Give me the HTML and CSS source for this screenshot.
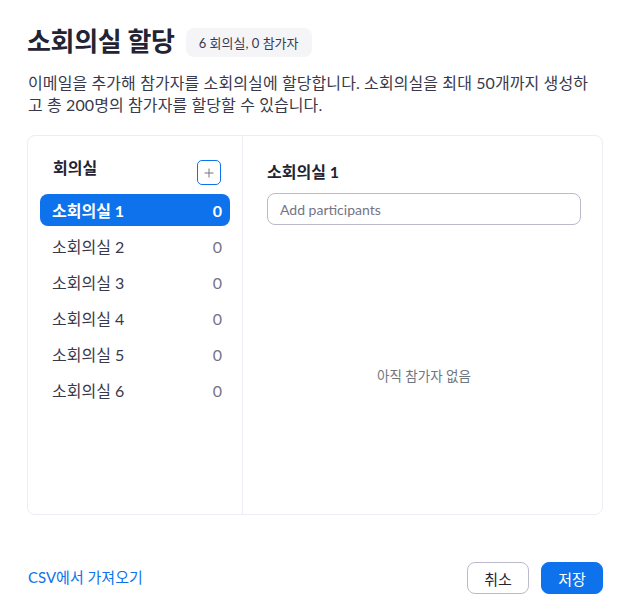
FILE: index.html
```html
<!DOCTYPE html>
<html lang="ko">
<head>
<meta charset="utf-8">
<link rel="stylesheet" href="styles.css">
</head>
<body>
<div class="dialog">
  <div class="header">
    <h1 class="title">소회의실 할당</h1>
    <span class="badge">6 회의실, 0 참가자</span>
  </div>
  <p class="desc">이메일을 추가해 참가자를 소회의실에 할당합니다. 소회의실을 최대 50개까지 생성하고 총 200명의 참가자를 할당할 수 있습니다.</p>
  <div class="panel">
    <div class="rooms">
      <div class="rooms-head">
        <span class="rooms-title">회의실</span>
        <button class="add-btn" aria-label="add">
          <svg width="10" height="10" viewBox="0 0 10 10"><path d="M5 0.5v9M0.5 5h9" stroke="#747487" stroke-width="1" fill="none"/></svg>
        </button>
      </div>
      <ul class="room-list">
        <li class="room selected"><span>소회의실 1</span><span class="count">0</span></li>
        <li class="room"><span>소회의실 2</span><span class="count">0</span></li>
        <li class="room"><span>소회의실 3</span><span class="count">0</span></li>
        <li class="room"><span>소회의실 4</span><span class="count">0</span></li>
        <li class="room"><span>소회의실 5</span><span class="count">0</span></li>
        <li class="room"><span>소회의실 6</span><span class="count">0</span></li>
      </ul>
    </div>
    <div class="detail">
      <div class="detail-title">소회의실 1</div>
      <input class="input" type="text" placeholder="Add participants">
      <div class="empty">아직 참가자 없음</div>
    </div>
  </div>
  <div class="footer">
    <a class="csv">CSV에서 가져오기</a>
    <div class="actions">
      <button class="btn cancel">취소</button>
      <button class="btn save">저장</button>
    </div>
  </div>
</div>
</body>
</html>
```
FILE: styles.css
```css
* { box-sizing: border-box; }
html, body { margin: 0; padding: 0; background: #fff; }
body {
  font-family: Lato, "Noto Sans CJK KR", sans-serif;
  color: #232333;
}
.dialog {
  width: 630px;
  padding: 24px 27px 0 27px;
}
.header {
  display: flex;
  align-items: center;
  gap: 11px;
  height: 34px;
}
.title {
  margin: 0;
  font-size: 26px;
  line-height: 32px;
  font-weight: 700;
  color: #232333;
  letter-spacing: -0.3px;
}
.badge {
  display: inline-flex;
  align-items: center;
  height: 29px;
  padding: 0 13px;
  margin-top: 3px;
  background: #f5f5f8;
  border-radius: 8px;
  font-size: 13px;
  color: #39394d;
}
.desc {
  margin: 14px 8px 0 1px;
  font-size: 16px;
  line-height: 22px;
  letter-spacing: 0.1px;
  color: #39394d;
}
.panel {
  margin-top: 19px;
  height: 380px;
  border: 1px solid #ededf3;
  border-radius: 8px;
  display: flex;
}
.rooms {
  width: 215px;
  border-right: 1px solid #ededf3;
  padding: 0 12px;
}
.rooms-head {
  display: flex;
  justify-content: space-between;
  align-items: flex-start;
  padding: 21px 9px 0 13px;
  height: 58px;
}
.rooms-title {
  font-size: 16px;
  font-weight: 700;
  line-height: 22px;
  color: #232333;
}
.add-btn {
  margin-top: 3px;
  width: 24px;
  height: 25px;
  border: 1px solid #0e72ed;
  border-radius: 5px;
  background: #fff;
  padding: 0;
  display: flex;
  align-items: center;
  justify-content: center;
}
.room-list {
  list-style: none;
  margin: 0;
  padding: 0;
  display: flex;
  flex-direction: column;
  gap: 4px;
}
.room {
  height: 32px;
  display: flex;
  align-items: center;
  justify-content: space-between;
  padding: 0 8px 0 12px;
  border-radius: 8px;
  font-size: 16px;
  color: #39394d;
}
.room .count { color: #747487; }
.room.selected {
  background: #0e72ed;
  color: #fff;
  font-weight: 700;
}
.room.selected .count { color: #fff; }
.detail {
  flex: 1;
  padding: 25px 21px 0 24px;
  display: flex;
  flex-direction: column;
}
.detail-title {
  font-size: 16px;
  font-weight: 700;
  line-height: 22px;
  margin-bottom: 10px;
  color: #232333;
}
.input {
  width: 100%;
  height: 32px;
  border: 1px solid #babacc;
  border-radius: 8px;
  padding: 0 12px;
  font-family: Lato, "Noto Sans CJK KR", sans-serif;
  font-size: 14px;
  color: #232333;
  outline: none;
}
.input::placeholder { color: #747487; }
.empty {
  flex: 1;
  display: flex;
  align-items: center;
  justify-content: center;
  padding-top: 10px;
  font-size: 13.5px;
  color: #6e7680;
}
.footer {
  margin-top: 47px;
  display: flex;
  justify-content: space-between;
  align-items: center;
}
.csv {
  font-size: 15px;
  color: #0e72ed;
  margin: -4px 0 0 1px;
}
.actions {
  display: flex;
  gap: 12px;
}
.btn {
  width: 62px;
  height: 32px;
  border-radius: 8px;
  font-family: Lato, "Noto Sans CJK KR", sans-serif;
  font-size: 15px;
  padding: 0;
}
.cancel {
  background: #fff;
  border: 1px solid #babacc;
  color: #232333;
}
.save {
  background: #0e72ed;
  border: 1px solid #0e72ed;
  color: #fff;
}
```
